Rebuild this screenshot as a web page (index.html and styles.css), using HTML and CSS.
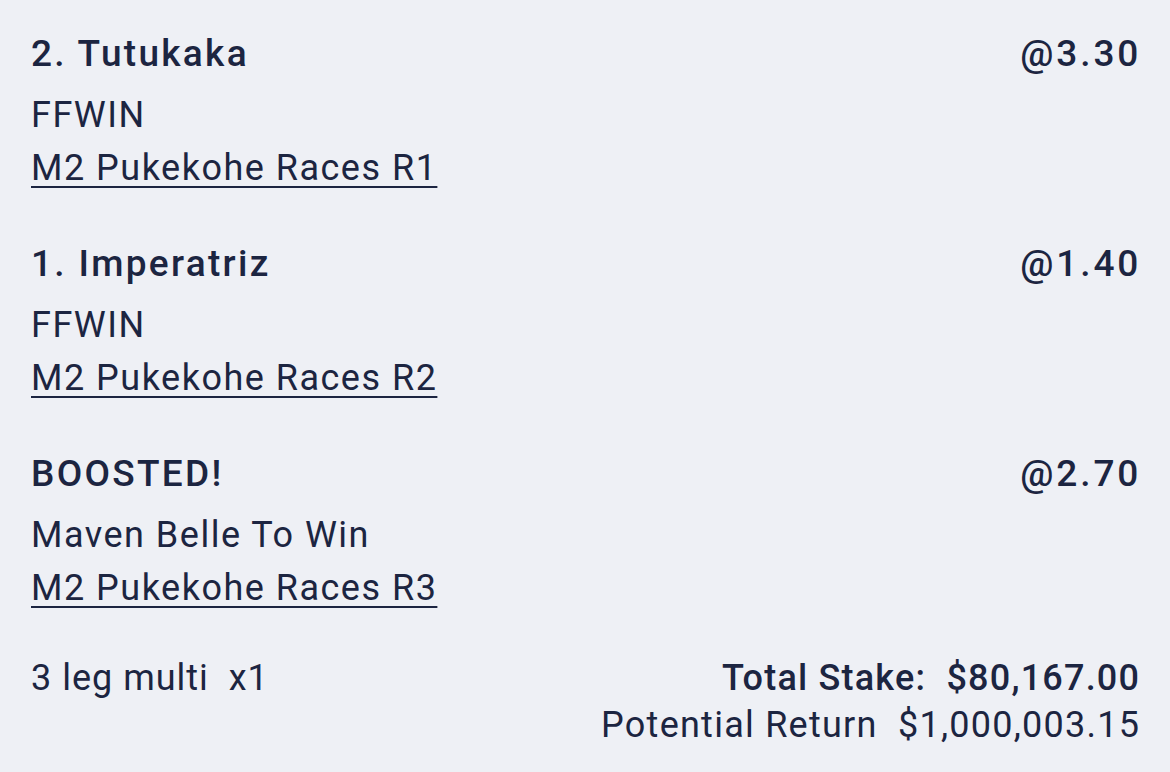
FILE: index.html
```html
<!DOCTYPE html>
<html>
<head>
<meta charset="utf-8">
<link rel="stylesheet" href="styles.css">
</head>
<body>
<main class="slip">
  <section class="leg">
    <div class="leg-head"><span>2. Tutukaka</span><span class="odds">@3.30</span></div>
    <div class="leg-sub">FFWIN</div>
    <a class="leg-link" href="#">M2 Pukekohe Races R1</a>
  </section>
  <section class="leg">
    <div class="leg-head"><span>1. Imperatriz</span><span class="odds">@1.40</span></div>
    <div class="leg-sub">FFWIN</div>
    <a class="leg-link" href="#">M2 Pukekohe Races R2</a>
  </section>
  <section class="leg">
    <div class="leg-head"><span>BOOSTED!</span><span class="odds">@2.70</span></div>
    <div class="leg-sub">Maven Belle To Win</div>
    <a class="leg-link" href="#">M2 Pukekohe Races R3</a>
  </section>
  <footer class="summary">
    <div class="summary-left">3 leg multi&nbsp; x1</div>
    <div class="summary-right">
      <div class="stake">Total Stake:&nbsp; $80,167.00</div>
      <div class="return">Potential Return&nbsp; $1,000,003.15</div>
    </div>
  </footer>
</main>
</body>
</html>
```

FILE: styles.css
```css
html, body {
  margin: 0;
  padding: 0;
  background: #eef0f5;
}
body {
  font-family: Roboto, "Liberation Sans", sans-serif;
  color: #1c2541;
}
.slip {
  padding: 30px 31px 0 31px;
  display: flex;
  flex-direction: column;
}
.leg {
  display: flex;
  flex-direction: column;
  margin-bottom: 45px;
}
.leg-head {
  display: flex;
  justify-content: space-between;
  font-size: 37px;
  line-height: 48px;
  font-weight: 500;
  letter-spacing: 2.3px;
  margin-bottom: 11px;
}
.odds {
  margin-right: -2.3px;
  letter-spacing: 2.9px;
}
.leg-sub, .leg-link {
  font-size: 36px;
  line-height: 53px;
  letter-spacing: 1.5px;
}
.leg-link {
  color: inherit;
  text-decoration: underline;
  text-decoration-thickness: 2px;
  text-underline-offset: 6px;
  align-self: flex-start;
}
.summary {
  display: flex;
  justify-content: space-between;
  font-size: 36px;
  line-height: 47px;
  letter-spacing: 1px;
  margin-top: -5px;
}
.summary-right {
  text-align: right;
  margin-right: -1px;
}
.stake {
  font-weight: 500;
  letter-spacing: 1.2px;
  margin-right: -0.2px;
}
.return {
  letter-spacing: 1.25px;
  margin-right: -0.25px;
}
```
